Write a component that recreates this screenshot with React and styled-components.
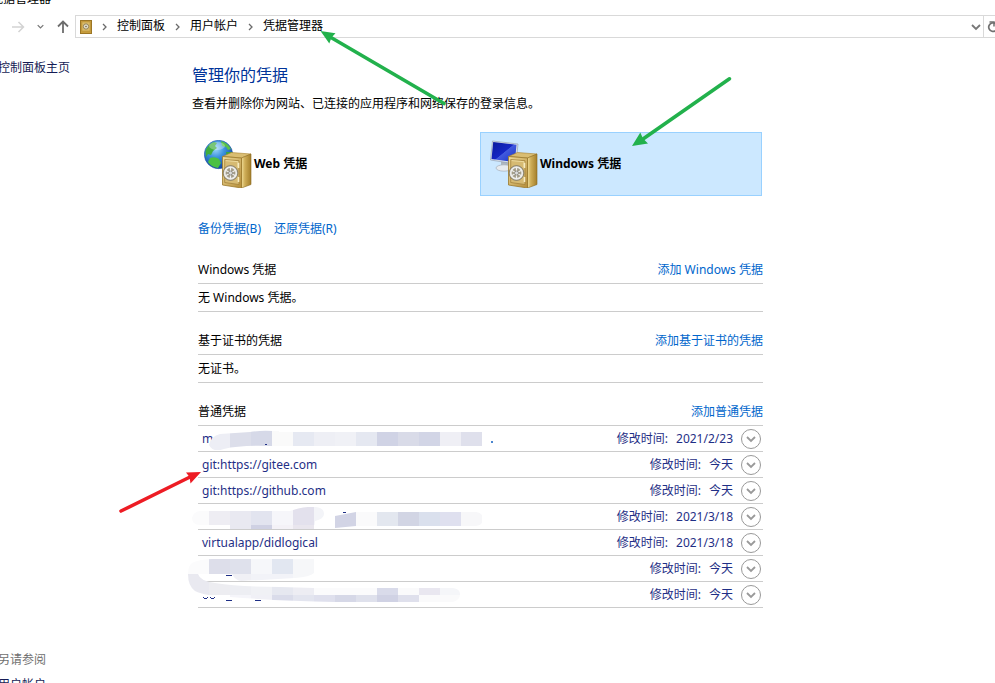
import styled, { createGlobalStyle } from "styled-components";

const credentials = [
  { name: "m", modified: "2021/2/23" },
  { name: "git:https://gitee.com", modified: "今天" },
  { name: "git:https://github.com", modified: "今天" },
  { name: "", modified: "2021/3/18" },
  { name: "virtualapp/didlogical", modified: "2021/3/18" },
  { name: "", modified: "今天" },
  { name: "", modified: "今天" },
];

// [y, height, start x, one colour per 21px block]
const mosaic = {
  first: [
    [430, 20, 209, ["#edeef5", "#dcdeea", "#d6d9e8", "#fafafa"]],
    [
      432,
      14,
      293,
      ["#e6e9f2", "#eeeff5", "#f0f1f6", "#e5e8f1", "#d0d3e5", "#d9dbe8", "#d2d5e6", "#efeff5", "#dfe0ec"],
    ],
  ],
  fourth: [
    [507, 18, 188, ["#fbfbfc", "#eeedf3", "#e9e9f1", "#e2e4ef", "#f6f6fa", "#e3e1ed", "#f3f4f8"]],
    [525, 4, 230, ["#e9e9f1", "#cfd1e3", "#f4f2f7", "#e9e6ee"]],
  ],
  fourthRight: [
    [512, 16, 335, ["#d2d4e5", "#fafafb", "#e3e7ef", "#d2d5e4", "#dae0ed", "#dfe0ef", "#f7f7f9"]],
  ],
  sixth: [
    [559, 15, 188, ["#fbfbfc", "#dddeea", "#dfe1ec", "#f6f7fa", "#e2e7f1", "#f6f7f9"]],
    [574, 7, 230, ["#f0f0f5", "#f2f3f8", "#f2f3f8", "#f6f7f9"]],
  ],
  seventh: [
    [574, 21, 188, ["#e9e9f0", "#ededf1", "#edeef3", "#f0f1f5", "#e6e8f0", "#ededf3"]],
    [588, 7, 314, ["#fbfbfc", "#fbfbfc", "#fbfbfc", "#d9dbea", "#fafafb", "#e9e7f0", "#f5f6f9"]],
    [
      595,
      7,
      230,
      ["#f5f5fa", "#f0f0f6", "#dadcea", "#e3e5ef", "#dfe0ed", "#d6d8e7", "#dfe1ec", "#d0d2e4", "#dfe0ec", "#fafafb", "#fafafb"],
    ],
  ],
};

const Blocks = ({ rows, clip }) => (
  <g clipPath={`url(#${clip})`}>
    {rows.map(([y, height, x, colors]) =>
      colors.map((color, i) => (
        <rect
          key={`${y}-${i}`}
          x={x + i * 21}
          y={y}
          width="21"
          height={height}
          fill={color}
        />
      ))
    )}
  </g>
);

const MosaicOverlay = () => (
  <Mosaic width="310" height="182" viewBox="188 426 310 182" aria-hidden="true">
    <clipPath id="c1">
      <path d="M209 445Q211 436 220 434L250 432Q262 430 273 431H279V432H482V446H270Q240 445 224 449Q213 453 209 445Z" />
    </clipPath>
    <clipPath id="c4">
      <path d="M192 518Q193 512 200 511H290Q305 506 316 507Q324 508 324 514Q324 519 315 521L314 529H230V525H200Q192 525 192 518Z" />
    </clipPath>
    <clipPath id="c4r">
      <path d="M335 516L356 512H476Q483 513 483 519Q483 525 476 526H356L335 528Z" />
    </clipPath>
    <clipPath id="c6">
      <path d="M192 563Q200 559 213 559H314V573Q310 577 295 578Q265 580 241 581Q235 580 232 574H188Q188 566 192 563Z" />
    </clipPath>
    <clipPath id="c7">
      <path d="M188 574H198Q200 581 215 583Q240 587 280 587L314 588H453Q460 589 460 594Q460 600 453 602H335Q280 601 230 597Q205 596 195 591Q188 586 188 574Z" />
    </clipPath>
    <Blocks rows={mosaic.first} clip="c1" />
    <Blocks rows={mosaic.fourth} clip="c4" />
    <Blocks rows={mosaic.fourthRight} clip="c4r" />
    <Blocks rows={mosaic.sixth} clip="c6" />
    <Blocks rows={mosaic.seventh} clip="c7" />
    <g fill="#1f2f86">
      <rect x="491" y="441" width="2" height="2" fill="#4b86cf" />
      <rect x="265" y="444" width="2" height="1" />
      <rect x="343" y="512" width="3" height="1" />
      <rect x="226" y="575" width="6" height="1" />
      <path d="M203 597h1v1h3v-1h1v1h-1v1h-3v-1h-1zM210 597h1v1h3v-1h1v1h-1v1h-3v-1h-1z" />
      <rect x="226" y="600" width="6" height="1" />
      <rect x="255" y="600" width="6" height="1" />
    </g>
  </Mosaic>
);

const Safe = () => (
  <g>
    <path d="M18.500 16.500L27.500 12.500L47 14L37.500 18Z" fill="#d9bd72" stroke="#a9822e" strokeWidth=".6" />
    <path d="M37.500 18L47 14V44.500L37.500 48Z" fill="url(#safeSide)" stroke="#8c6a1f" strokeWidth=".6" />
    <path d="M18.500 16.500L37.500 18V48L18.500 45Z" fill="url(#safeFront)" stroke="#9b782b" strokeWidth=".8" />
    <path d="M20.700 19.500L35 20.700V44.500L20.700 42.500Z" fill="#d6ba72" stroke="#9d7d36" strokeWidth=".7" />
    <path d="M21.700 20.600L34 21.700V27" fill="none" stroke="#f2e2a9" strokeWidth=".8" />
    <path d="M34.500 23V28M34.500 37V42" stroke="#f7ebc0" strokeWidth="1.600" />
    <circle cx="26.500" cy="33" r="7.400" fill="#a39c88" stroke="#77705e" strokeWidth=".7" />
    <circle cx="26.500" cy="33" r="5.800" fill="none" stroke="#ececea" strokeWidth="1.800" />
    <path d="M26.500 27V39M21 30L32 36M32 30L21 36" stroke="#f0f0ee" strokeWidth="1.200" />
    <circle cx="26.500" cy="33" r="2" fill="#dcdddd" stroke="#77756d" strokeWidth=".7" />
  </g>
);

const IconDefs = () => (
  <defs>
    <radialGradient id="sea" cx=".4" cy=".3" r=".75">
      <stop offset="0" stopColor="#9fd8fb" />
      <stop offset=".4" stopColor="#3d93de" />
      <stop offset="1" stopColor="#0c3d99" />
    </radialGradient>
    <linearGradient id="screen" x1="0" y1="0" x2="1" y2="1">
      <stop offset="0" stopColor="#0a1a9c" />
      <stop offset=".5" stopColor="#1526c4" />
      <stop offset=".52" stopColor="#4159de" />
      <stop offset="1" stopColor="#1733c4" />
    </linearGradient>
    <linearGradient id="safeFront" x1="0" y1="0" x2="1" y2="1">
      <stop offset="0" stopColor="#f0dc9c" />
      <stop offset="1" stopColor="#b58d38" />
    </linearGradient>
    <linearGradient id="safeSide" x1="0" y1="0" x2="1" y2="0">
      <stop offset="0" stopColor="#f0dd98" />
      <stop offset=".35" stopColor="#cfae58" />
      <stop offset="1" stopColor="#a47f2b" />
    </linearGradient>
  </defs>
);

const WebIcon = () => (
  <svg width="48" height="48" viewBox="0 0 48 48" aria-hidden="true">
    <IconDefs />
    <circle cx="14.500" cy="14.500" r="14.200" fill="url(#sea)" stroke="#1c4f9c" strokeWidth=".5" />
    <path d="M1.500 11Q4 4 10 2L13 3L11 6L13 8L9 11L7 15L4 14L2 17Z" fill="#3fae3d" />
    <path d="M17 1Q24 3 27 9L24 10L22 7L18 6Z" fill="#57c04b" />
    <path d="M6 18Q11 16 15 19L17 23L14 28Q7 27 4 22Z" fill="#4cc043" />
    <path d="M22 12L28 12Q29 17 27 20L23 18Z" fill="#39a843" />
    <ellipse cx="13" cy="6" rx="8" ry="4" fill="#fff" opacity=".3" />
    <Safe />
  </svg>
);

const WindowsIcon = () => (
  <svg width="48" height="48" viewBox="0 0 48 48" aria-hidden="true">
    <path d="M11 20L19 21V28H11Z" fill="#aeb7c0" />
    <ellipse cx="14" cy="28" rx="8" ry="3.200" fill="#e7ebef" stroke="#a5afba" strokeWidth=".7" />
    <path d="M2.500 1L28 4L26 24L.5 20Z" fill="#dce2ea" stroke="#8d99ab" strokeWidth=".6" />
    <path d="M3.200 1.900L26.500 4.800L24.800 22.200L1.500 19Z" fill="url(#screen)" />
    <Safe />
  </svg>
);

const VaultIcon = () => (
  <svg width="12" height="14" viewBox="0 0 12 14" aria-hidden="true">
    <rect x=".5" y=".5" width="11" height="13" fill="#c79c3b" stroke="#9c7625" />
    <rect x="2" y="2" width="8" height="9" fill="#dcbc69" stroke="#b8933f" strokeWidth=".6" />
    <circle cx="6" cy="6.500" r="2.700" fill="#e0dccb" stroke="#958253" />
    <circle cx="6" cy="6.500" r=".8" fill="#76653b" />
  </svg>
);

const Crumb = () => (
  <svg width="5" height="8" viewBox="0 0 5 8" aria-hidden="true">
    <path d="M1 1L4 4L1 7" fill="none" stroke="#6b6b6b" strokeWidth="1.300" />
  </svg>
);

const Down = ({ size, color }) => (
  <svg width={size} height={size} viewBox="0 0 10 10" aria-hidden="true">
    <path d="M1 3L5 7L9 3" fill="none" stroke={color} strokeWidth="1.800" />
  </svg>
);

const Arrows = () => (
  <ArrowLayer width="995" height="683" aria-hidden="true">
    <g stroke="#22b14c" fill="#22b14c" strokeLinecap="round">
      <path d="M444 103.500L331 37.500" strokeWidth="3.600" />
      <path d="M320.500 31L335.500 33.300L331.500 37.500L329.300 43.500Z" stroke="none" />
      <path d="M729.500 78.800L643 139" strokeWidth="3.600" />
      <path d="M632 146L640.300 132.500L643 138.500L648 143.500Z" stroke="none" />
    </g>
    <path d="M121 511L189 477.500" stroke="#ed1c24" strokeWidth="3.600" strokeLinecap="round" />
    <path d="M201 472L186 472.500L189.500 477L190.500 483.500Z" fill="#ed1c24" />
  </ArrowLayer>
);

const App = () => {
  return (
    <>
      <GlobalStyle />
      <Window>
        <TitleBar>凭据管理器</TitleBar>
        <Toolbar>
          <NavButtons>
            <NavButton aria-label="前进" disabled>
              <svg width="13" height="12" viewBox="0 0 13 12">
                <path d="M0 6H11.500M6.500 1L11.500 6L6.500 11" fill="none" stroke="#d3d3d3" strokeWidth="1.500" />
              </svg>
            </NavButton>
            <NavButton aria-label="最近浏览的位置">
              <Down size={7} color="#777" />
            </NavButton>
            <NavButton aria-label="上移">
              <svg width="12" height="13" viewBox="0 0 12 13">
                <path d="M6 13V1.500M1 6.500L6 1.500L11 6.500" fill="none" stroke="#6d6d6d" strokeWidth="1.800" />
              </svg>
            </NavButton>
          </NavButtons>
          <AddressBar>
            <VaultIcon />
            <Crumb />
            <CrumbLink href="#">控制面板</CrumbLink>
            <Crumb />
            <CrumbLink href="#">用户帐户</CrumbLink>
            <Crumb />
            <CrumbLink href="#">凭据管理器</CrumbLink>
            <HistoryButton aria-label="以前的位置">
              <Down size={10} color="#777" />
            </HistoryButton>
          </AddressBar>
          <RefreshButton aria-label="刷新">
            <svg width="12" height="12" viewBox="0 0 12 12">
              <path d="M8.500 2.600A4.300 4.300 0 1 0 10.300 6.500" fill="none" stroke="#707070" strokeWidth="1.700" />
              <path d="M2.500 1H7V5.500" fill="none" stroke="#707070" strokeWidth="1.500" />
            </svg>
          </RefreshButton>
        </Toolbar>
        <Body>
          <Sidebar>
            <SideLink href="#">控制面板主页</SideLink>
            <SeeAlso>
              <span>另请参阅</span>
              <SideLink href="#">用户帐户</SideLink>
            </SeeAlso>
          </Sidebar>
          <Main>
            <Title>管理你的凭据</Title>
            <Description>
              查看并删除你为网站、已连接的应用程序和网络保存的登录信息。
            </Description>
            <Vaults>
              <VaultButton>
                <WebIcon />
                Web 凭据
              </VaultButton>
              <VaultButton $selected>
                <WindowsIcon />
                Windows 凭据
              </VaultButton>
            </Vaults>
            <Details>
              <Actions>
                <Link href="#">备份凭据(B)</Link>
                <Link href="#">还原凭据(R)</Link>
              </Actions>
              <Section>
                <SectionHeader>
                  <SectionTitle>Windows 凭据</SectionTitle>
                  <Link href="#">添加 Windows 凭据</Link>
                </SectionHeader>
                <Empty>无 Windows 凭据。</Empty>
              </Section>
              <Section>
                <SectionHeader>
                  <SectionTitle>基于证书的凭据</SectionTitle>
                  <Link href="#">添加基于证书的凭据</Link>
                </SectionHeader>
                <Empty>无证书。</Empty>
              </Section>
              <Section>
                <SectionHeader>
                  <SectionTitle>普通凭据</SectionTitle>
                  <Link href="#">添加普通凭据</Link>
                </SectionHeader>
                <List>
                  {credentials.map(({ name, modified }, i) => (
                    <Row key={i}>
                      <Name>{name}</Name>
                      <span>修改时间:</span>
                      <span>{modified}</span>
                      <ExpandButton aria-label="展开">
                        <Down size={10} color="#999" />
                      </ExpandButton>
                    </Row>
                  ))}
                  <MosaicOverlay />
                </List>
              </Section>
            </Details>
          </Main>
        </Body>
        <Arrows />
      </Window>
    </>
  );
};

const GlobalStyle = createGlobalStyle`
  body {
    margin: 0;
    background: #fff;
    color: #000;
    font: 12px/16px "Noto Sans", "Noto Sans CJK SC", sans-serif;
  }

  button {
    padding: 0;
    border: 0;
    background: none;
    font: inherit;
    color: inherit;
  }

  a {
    text-decoration: none;
  }
`;

const Window = styled.div`
  position: relative;
  display: flex;
  flex-direction: column;
  height: 100vh;
  overflow: hidden;
`;

const TitleBar = styled.header`
  flex: none;
  height: 24px;
  margin: -9px 0 0 -9px;
`;

const Toolbar = styled.nav`
  display: flex;
  flex: none;
  height: 23px;
`;

const NavButtons = styled.div`
  display: flex;
  gap: 9px;
  padding: 0 6px 0 12px;
`;

const NavButton = styled.button`
  display: flex;
  align-items: center;
  justify-content: center;
  width: 13px;
`;

const AddressBar = styled.div`
  display: flex;
  flex: 1;
  align-items: center;
  gap: 10px;
  box-sizing: border-box;
  padding: 0 2px 0 4px;
  border: 1px solid #d9d9d9;
`;

const CrumbLink = styled.a`
  padding-bottom: 2px;
  color: #000;
`;

const HistoryButton = styled.button`
  display: flex;
  margin-left: auto;
`;

const RefreshButton = styled.button`
  display: flex;
  flex: none;
  align-items: center;
  width: 11px;
  padding-left: 3px;
  overflow: hidden;
  box-sizing: border-box;
  border: solid #d9d9d9;
  border-width: 1px 0;

  svg {
    flex: none;
  }
`;

const Body = styled.div`
  display: flex;
  flex: 1;
  min-height: 0;
`;

const Sidebar = styled.aside`
  display: flex;
  flex: none;
  flex-direction: column;
  box-sizing: border-box;
  width: 192px;
  padding-top: 22px;
  margin: 0 0 -10px -2px;
`;

const SideLink = styled.a`
  color: #151c55;
`;

const SeeAlso = styled.div`
  display: flex;
  flex-direction: column;
  gap: 9px;
  margin-top: auto;
  color: #707070;
`;

const Main = styled.main`
  flex: 1;
  max-width: 571px;
  padding: 25px 0 0 2px;
`;

const Title = styled.h1`
  margin: 0;
  font-size: 16px;
  font-weight: 400;
  line-height: 24px;
  color: #003399;
`;

const Description = styled.p`
  margin: 9px 0 20px;
`;

const Vaults = styled.div`
  display: grid;
  grid-template-columns: 1fr 1fr;
  gap: 4px;
  padding: 0 1px 0 2px;
`;

const VaultButton = styled.button`
  display: flex;
  align-items: center;
  gap: 2px;
  box-sizing: border-box;
  height: 64px;
  padding: 0 9px;
  border: 1px solid ${({ $selected }) => ($selected ? "#99d1ff" : "transparent")};
  background: ${({ $selected }) => ($selected ? "#cce8ff" : "transparent")};
  font-weight: 700;
`;

const Details = styled.div`
  padding: 25px 0 0 6px;
`;

const Link = styled.a`
  color: #0066cc;
`;

const Actions = styled.div`
  display: flex;
  gap: 13px;
  margin-bottom: 19px;
`;

const Section = styled.section`
  margin-bottom: 15px;
`;

const SectionHeader = styled.div`
  display: flex;
  align-items: center;
  justify-content: space-between;
  box-sizing: border-box;
  height: 28px;
  border-bottom: 1px solid #cccccc;
`;

const SectionTitle = styled.h2`
  margin: 0;
  font-size: 12px;
  font-weight: 400;
`;

const Empty = styled.p`
  box-sizing: border-box;
  height: 28px;
  margin: 0;
  padding: 6px 0 5px;
  border-bottom: 1px solid #cccccc;
`;

const List = styled.ul`
  position: relative;
  margin: 0;
  padding: 0;
  list-style: none;
`;

const Row = styled.li`
  display: flex;
  align-items: center;
  gap: 8px;
  box-sizing: border-box;
  height: 26px;
  padding: 0 2px 0 4px;
  border-bottom: 1px solid #cccccc;
  color: #1f2f86;
`;

const Name = styled.span`
  flex: 1;
`;

const ExpandButton = styled.button`
  display: flex;
  align-items: center;
  justify-content: center;
  box-sizing: border-box;
  width: 20px;
  height: 20px;
  border: 1px solid #999;
  border-radius: 50%;
`;

const Mosaic = styled.svg`
  position: absolute;
  top: 0;
  left: -10px;
  pointer-events: none;
`;

const ArrowLayer = styled.svg`
  position: absolute;
  top: 0;
  left: 0;
  pointer-events: none;
`;

export default App;
